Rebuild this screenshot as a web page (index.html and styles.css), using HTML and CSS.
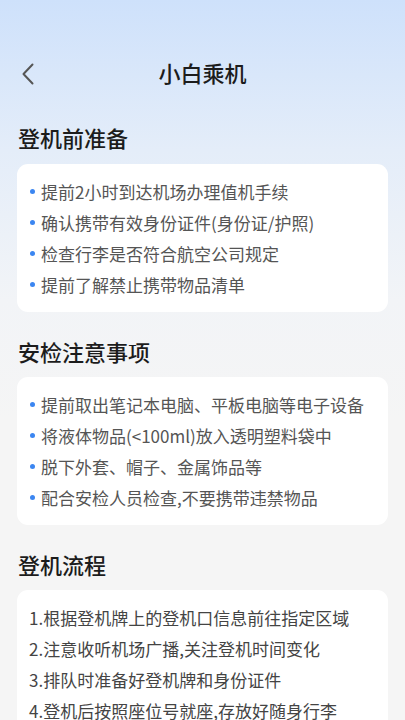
FILE: index.html
```html
<!DOCTYPE html>
<html lang="zh-CN">
<head>
<meta charset="utf-8">
<link rel="stylesheet" href="styles.css">
</head>
<body>
<div class="page">
  <header class="topbar">
    <span class="back">
      <svg width="14" height="22" viewBox="0 0 14 22"><path d="M11.5 1.5 L2.5 11 L11.5 20.5" fill="none" stroke="#555" stroke-width="2" stroke-linecap="round" stroke-linejoin="round"/></svg>
    </span>
    <h1 class="title">小白乘机</h1>
  </header>

  <section class="section first">
    <h2 class="sec-title">登机前准备</h2>
    <ul class="card bullets">
      <li>提前2小时到达机场办理值机手续</li>
      <li>确认携带有效身份证件(身份证/护照)</li>
      <li>检查行李是否符合航空公司规定</li>
      <li>提前了解禁止携带物品清单</li>
    </ul>
  </section>

  <section class="section">
    <h2 class="sec-title">安检注意事项</h2>
    <ul class="card bullets">
      <li>提前取出笔记本电脑、平板电脑等电子设备</li>
      <li>将液体物品(&lt;100ml)放入透明塑料袋中</li>
      <li>脱下外套、帽子、金属饰品等</li>
      <li>配合安检人员检查,不要携带违禁物品</li>
    </ul>
  </section>

  <section class="section">
    <h2 class="sec-title">登机流程</h2>
    <ul class="card steps">
      <li>1.根据登机牌上的登机口信息前往指定区域</li>
      <li>2.注意收听机场广播,关注登机时间变化</li>
      <li>3.排队时准备好登机牌和身份证件</li>
      <li>4.登机后按照座位号就座,存放好随身行李</li>
    </ul>
  </section>
</div>
</body>
</html>
```

FILE: styles.css
```css
* { box-sizing: border-box; }
html, body {
  margin: 0;
  padding: 0;
}
body {
  font-family: "Noto Sans CJK SC", "Noto Sans", sans-serif;
  background: linear-gradient(180deg, #cee1fb 0px, #e4edf9 150px, #f2f4f7 300px, #f5f5f5 420px, #f5f5f5 100%);
  min-height: 720px;
  color: #222;
}
.page {
  padding: 48px 17px 0 17px;
}
.topbar {
  position: relative;
  height: 48px;
  display: flex;
  align-items: center;
  justify-content: center;
}
.back {
  position: absolute;
  left: 4px;
  top: 15px;
  width: 14px;
  height: 22px;
  display: flex;
}
.title {
  margin: 0;
  font-size: 22px;
  font-weight: 500;
  line-height: 30px;
  color: #1c1c1c;
}
.section {
  margin-top: 24px;
}
.section.first {
  margin-top: 26px;
}
.sec-title {
  margin: 0 0 11px 1px;
  font-size: 22px;
  font-weight: 500;
  line-height: 30px;
  color: #1c1c1c;
}
.first .sec-title {
  margin-bottom: 12px;
}
.card {
  list-style: none;
  margin: 0;
  background: #fff;
  border-radius: 11px;
  padding: 12px 12px;
}
.card li {
  font-size: 17px;
  line-height: 31px;
  color: #555;
  white-space: nowrap;
  display: flex;
  align-items: center;
}
.bullets li::before {
  content: "";
  width: 5px;
  height: 5px;
  border-radius: 50%;
  background: #3b86f1;
  margin: 0 6px 0 1px;
  flex: none;
}
.steps {
  padding-left: 12px;
}
.steps li {
  color: #444;
}
```
